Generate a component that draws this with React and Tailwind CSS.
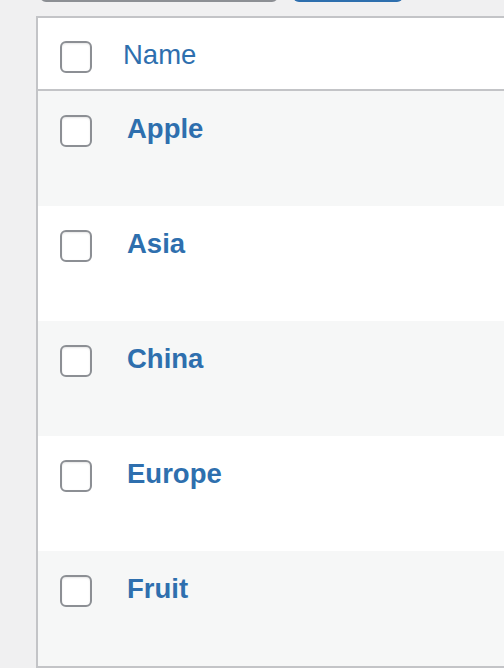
import React from "react";

const terms = ["Apple", "Asia", "China", "Europe", "Fruit"];

const Checkbox = () => (
  <span className="block w-[32px] h-[32px] shrink-0 rounded-[6px] border-2 border-[#8c8f94] bg-white shadow-[inset_0_1px_2px_rgba(0,0,0,0.1)]"></span>
);

const App = () => {
  return (
    <div
      className="min-h-[668px] bg-[#f0f0f1] overflow-hidden"
      style={{ fontFamily: '"Liberation Sans", Arial, sans-serif' }}
    >
      {/* bulk actions bar, mostly scrolled off */}
      <div className="flex items-end gap-[15px] pl-[40px] h-[40px] -mt-[38px]">
        <div className="w-[238px] h-[40px] rounded-[6px] border-2 border-[#8c8f94] bg-white"></div>
        <div className="w-[110px] h-[40px] rounded-[6px] bg-[#2e6fae]"></div>
      </div>

      <div className="mt-[14px] ml-[36px] border-2 border-r-0 border-[#c3c4c7] bg-white">
        {/* header */}
        <div className="flex items-start h-[73px] pt-[23px] pl-[22px] border-b-2 border-[#c3c4c7] bg-white">
          <Checkbox />
          <span className="ml-[31px] text-[27.5px] leading-[28px] text-[#2e6fae]">
            Name
          </span>
        </div>

        {terms.map((term, i) => (
          <div
            key={term}
            className={
              "flex items-start h-[115px] pt-[24px] pl-[22px] " +
              (i % 2 === 0 ? "bg-[#f6f7f7]" : "bg-white")
            }
          >
            <Checkbox />
            <span className="ml-[35px] text-[27.5px] leading-[28px] font-bold text-[#2e6fae]">
              {term}
            </span>
          </div>
        ))}
      </div>
    </div>
  );
};

export default App;
